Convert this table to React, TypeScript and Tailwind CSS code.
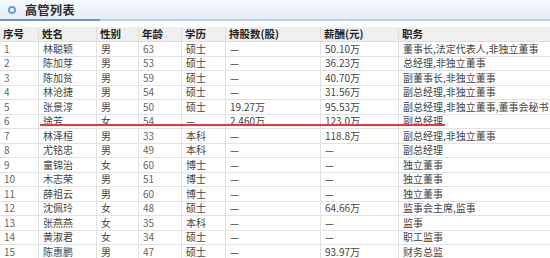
import React from "react";

const cols = [39, 58, 42, 43, 44, 95, 78, 151];
const headers = ["序号", "姓名", "性别", "年龄", "学历", "持股数(股)", "薪酬(元)", "职务"];
const rows: string[][] = [
  ["1", "林聪颖", "男", "63", "硕士", "—", "50.10万", "董事长,法定代表人,非独立董事"],
  ["2", "陈加芽", "男", "53", "硕士", "—", "36.23万", "总经理,非独立董事"],
  ["3", "陈加贫", "男", "59", "硕士", "—", "40.70万", "副董事长,非独立董事"],
  ["4", "林沧捷", "男", "54", "硕士", "—", "31.56万", "副总经理,非独立董事"],
  ["5", "张景淳", "男", "50", "硕士", "19.27万", "95.53万", "副总经理,非独立董事,董事会秘书"],
  ["6", "徐芳", "女", "54", "—", "2.460万", "123.0万", "副总经理"],
  ["7", "林泽桓", "男", "33", "本科", "—", "118.8万", "副总经理,非独立董事"],
  ["8", "尤铭忠", "男", "49", "本科", "—", "—", "副总经理"],
  ["9", "童锦治", "女", "60", "博士", "—", "—", "独立董事"],
  ["10", "木志荣", "男", "51", "博士", "—", "—", "独立董事"],
  ["11", "薛祖云", "男", "60", "博士", "—", "—", "独立董事"],
  ["12", "沈佩玲", "女", "48", "硕士", "—", "64.66万", "监事会主席,监事"],
  ["13", "张燕燕", "女", "35", "本科", "—", "—", "监事"],
  ["14", "黄淑君", "女", "34", "硕士", "—", "—", "职工监事"],
  ["15", "陈惠鹏", "男", "47", "硕士", "—", "93.97万", "财务总监"],
];

export default function App() {
  return (
    <div
      className="relative w-[550px] h-[258px] overflow-hidden bg-white text-[#333]"
      style={{ fontFamily: '"Noto Sans CJK SC", "DejaVu Sans", sans-serif' }}
    >
      <div className="h-[19px] bg-gradient-to-b from-[#f6f9fc] to-[#e4edf7] flex items-center pl-[8px]">
        <div className="w-[8px] h-[8px] rounded-full border-[2px] border-[#6f9bca] bg-white" />
        <span className="ml-[9px] text-[12px] font-bold text-[#2a2a2a] leading-none tracking-[0.5px]">高管列表</span>
      </div>
      <div className="flex h-[2px]">
        <div className="w-[100px] bg-[#7097c0]" />
        <div className="flex-1 bg-[#bdd2e8]" />
      </div>
      <div className="h-[6px]" />
      <div className="flex h-[15px] bg-[#efefef] border-b border-[#dcdcdc] text-[10.5px] font-bold text-[#222] leading-none">
        {headers.map((h, i) => (
          <div
            key={i}
            style={{ width: cols[i] }}
            className="flex items-center pl-[3px] border-r border-[#dedede] last:border-r-0 whitespace-nowrap"
          >
            {h}
          </div>
        ))}
      </div>
      {rows.map((r, ri) => (
        <div key={ri} className="flex h-[14.5px] border-b border-[#e2e2e2] text-[10px] leading-none text-[#444]">
          {r.map((c, ci) => (
            <div
              key={ci}
              style={{ width: cols[ci] }}
              className={
                "flex items-center pl-[4px] border-r border-[#e2e2e2] last:border-r-0 whitespace-nowrap overflow-hidden " +
                (ci === 3 || ci === 0 ? "text-[#666]" : "")
              }
            >
              {c}
            </div>
          ))}
        </div>
      ))}
      <div className="absolute left-[40px] top-[124px] w-[405px] h-[2px] bg-[#e23a3a]" />
    </div>
  );
}
